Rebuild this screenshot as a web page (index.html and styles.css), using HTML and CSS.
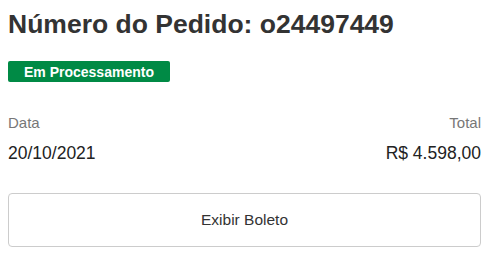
FILE: index.html
```html
<!DOCTYPE html>
<html lang="pt-BR">
<head>
<meta charset="utf-8">
<link rel="stylesheet" href="styles.css">
</head>
<body>
<div class="order">
  <h1 class="order-title">Número do Pedido: o24497449</h1>
  <div class="status-row"><span class="badge">Em Processamento</span></div>
  <div class="summary">
    <div class="cell">
      <div class="label">Data</div>
      <div class="value">20/10/2021</div>
    </div>
    <div class="cell cell-right">
      <div class="label">Total</div>
      <div class="value">R$ 4.598,00</div>
    </div>
  </div>
  <button class="btn" type="button">Exibir Boleto</button>
</div>
</body>
</html>
```

FILE: styles.css
```css
html, body {
  margin: 0;
  padding: 0;
  background: #fff;
}
body {
  padding: 9px 19px 8px 8px;
  font-family: "Liberation Sans", Arial, sans-serif;
}
.order {
  width: 473px;
  display: flex;
  flex-direction: column;
}
.order-title {
  margin: 0;
  font-size: 26.5px;
  line-height: 30px;
  font-weight: bold;
  color: #333;
}
.status-row {
  margin-top: 22px;
  display: flex;
}
.badge {
  display: inline-block;
  background: #008a45;
  color: #fff;
  font-size: 14px;
  font-weight: bold;
  line-height: 20px;
  padding: 1px 16px 0 16px;
  border-radius: 2px;
}
.summary {
  margin-top: 32px;
  display: flex;
  justify-content: space-between;
}
.cell {
  display: flex;
  flex-direction: column;
  gap: 13px;
}
.cell-right {
  align-items: flex-end;
}
.label {
  font-size: 15px;
  line-height: 17px;
  color: #777;
}
.value {
  font-size: 17.5px;
  line-height: 18px;
  color: #222;
}
.btn {
  margin-top: 31px;
  height: 54px;
  width: 473px;
  background: #fff;
  border: 1px solid #ccc;
  border-radius: 4px;
  font-family: "Liberation Sans", Arial, sans-serif;
  font-size: 15.5px;
  color: #333;
  padding: 0;
  display: flex;
  align-items: center;
  justify-content: center;
}
```
